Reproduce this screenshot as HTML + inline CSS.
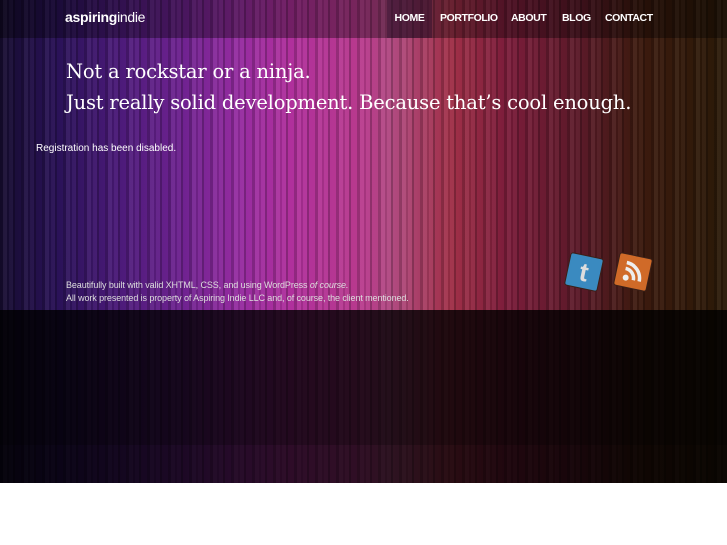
<!DOCTYPE html>
<html><head><meta charset="utf-8"><style>
*{margin:0;padding:0;box-sizing:border-box}
body{width:727px;height:545px;background:#fff;font-family:"Liberation Sans",sans-serif;overflow:hidden;position:relative}
#bg{position:absolute;left:0;top:0;width:727px;height:483px;
background:linear-gradient(90deg,#160c30 0%,#2a1258 8%,#4a1a78 16%,#6e2290 25%,#962ca0 33%,#b0309c 40%,#b83a8c 50%,#b04a80 54%,#a03048 62%,#7a1c3a 70%,#5a1a28 80%,#3c1a0e 88%,#2a1a08 100%)}
#stripes{position:absolute;left:0;top:0;width:727px;height:483px;
background:repeating-linear-gradient(90deg,rgba(0,0,0,.18) 0 3px,rgba(255,255,255,.05) 3px 7px,rgba(0,0,0,.1) 7px 9px,rgba(255,255,255,.03) 9px 13px,rgba(0,0,0,.22) 13px 15px,rgba(0,0,0,0) 15px 21px)}
#top{position:absolute;left:0;top:0;width:727px;height:38px;background:rgba(0,0,0,.35)}
#dark{position:absolute;left:0;top:310px;width:727px;height:135px;background:rgba(0,0,0,.8)}
#dark2{position:absolute;left:0;top:445px;width:727px;height:38px;background:rgba(0,0,0,.74)}
.logo{position:absolute;left:65px;top:9px;color:#fff;font-size:14px;font-weight:bold;letter-spacing:-.3px}
.logo span{font-weight:normal}
.nav{position:absolute;top:0;height:38px;line-height:36px;color:#fff;font-size:10.5px;font-weight:bold;letter-spacing:-.4px}
.home{left:387px;width:45px;background:rgba(40,10,40,.45);text-align:center}
h1{position:absolute;left:66px;color:#fff;font-family:"DejaVu Serif",serif;font-weight:normal;font-size:19.5px;white-space:nowrap;letter-spacing:-.2px}
.reg{position:absolute;left:36px;top:143px;color:#fff;font-size:10px}
.foot{position:absolute;left:66px;color:#ddd;font-size:9px;letter-spacing:-.1px}
.icon{position:absolute;width:34px;height:34px;border-radius:3px;border:1px solid #3a2018}
</style></head><body>
<div id="bg"></div><div id="stripes"></div><div id="top"></div><div id="dark"></div><div id="dark2"></div>
<div class="logo">aspiring<span>indie</span></div>
<div class="nav home">HOME</div>
<div class="nav" style="left:440px">PORTFOLIO</div>
<div class="nav" style="left:511px">ABOUT</div>
<div class="nav" style="left:562px">BLOG</div>
<div class="nav" style="left:605px">CONTACT</div>
<h1 style="top:60px">Not a rockstar or a ninja.</h1>
<h1 style="top:91px">Just really solid development. Because that’s cool enough.</h1>
<div class="reg">Registration has been disabled.</div>
<div class="foot" style="top:280px">Beautifully built with valid XHTML, CSS, and using WordPress <i>of course.</i></div>
<div class="foot" style="top:293px">All work presented is property of Aspiring Indie LLC and, of course, the client mentioned.</div>
<div class="icon" style="left:567px;top:255px;background:#3a8ac0;transform:rotate(12deg);color:#ddd;font:bold 26px 'Liberation Sans';text-align:center;line-height:32px">t</div>
<div class="icon" style="left:616px;top:255px;background:#d06a28;transform:rotate(12deg)"><svg width="32" height="32" viewBox="0 0 32 32"><circle cx="10" cy="23" r="3" fill="#eee"/><path d="M8 14a10 10 0 0 1 10 10M8 8a16 16 0 0 1 16 16" stroke="#eee" stroke-width="3.5" fill="none"/></svg></div>
</body></html>
